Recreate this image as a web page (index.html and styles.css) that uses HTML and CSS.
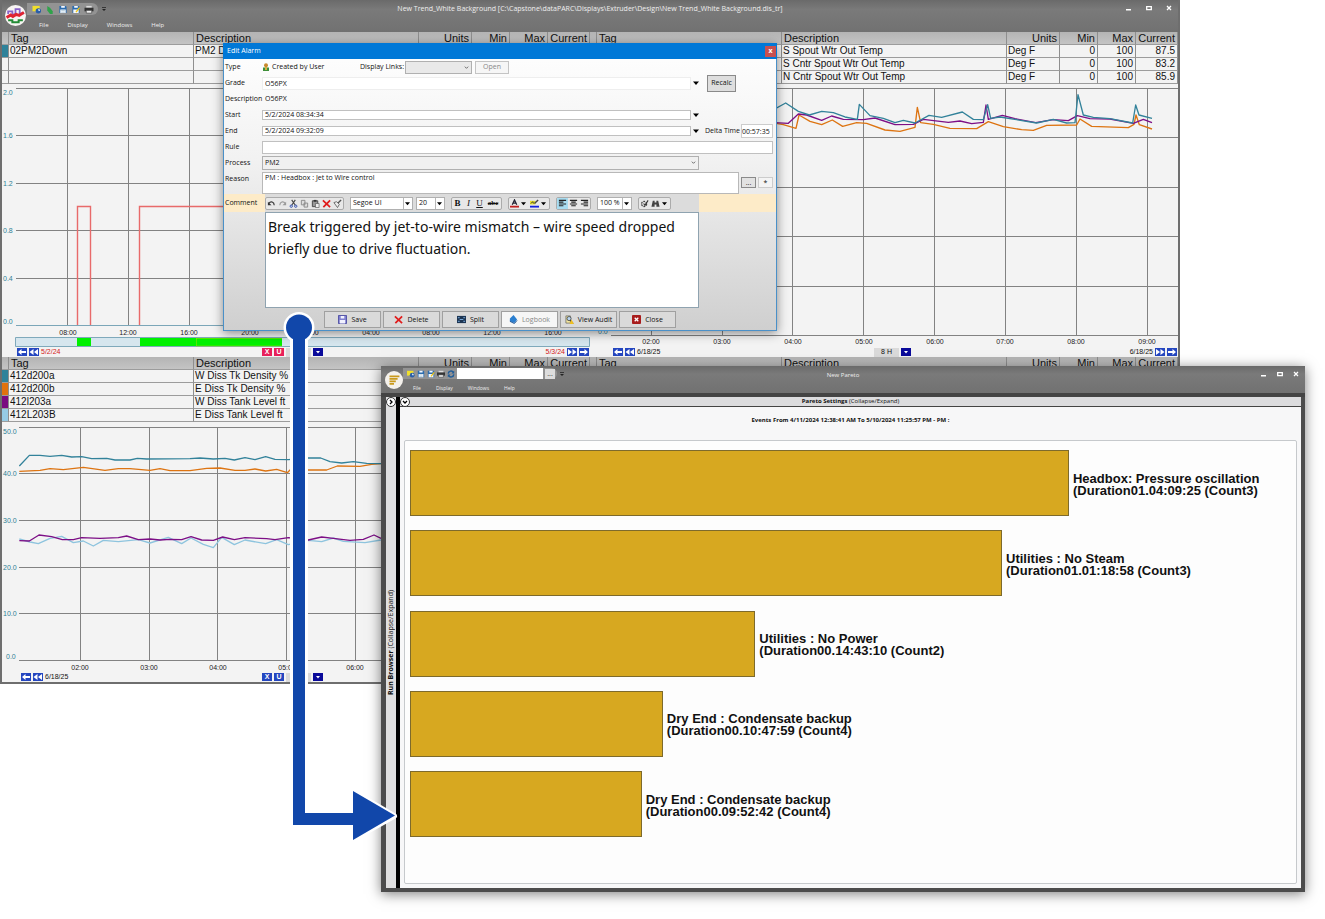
FILE: index.html
```html
<!DOCTYPE html>
<html lang="en">
<head>
<meta charset="utf-8">
<title>New Trend and Pareto</title>
<link rel="stylesheet" href="styles.css">
</head>
<body>
<svg class="sprite" aria-hidden="true">
  <symbol id="i-find" viewBox="0 0 10 10"><rect x="0" y="1" width="8" height="6" fill="#f0df2c"/><circle cx="6.5" cy="6.5" r="3" fill="#2a5fa8"/><path d="M6.500 4.500a2 2 0 0 1 2 2h-2z" fill="#fff"/></symbol>
  <symbol id="i-tag" viewBox="0 0 10 10"><path d="M2 1l3 2 3 4v3H5L2 6z" fill="#2fa34a"/></symbol>
  <symbol id="i-disk" viewBox="0 0 10 10"><path d="M1 1h7l1 1v7H1z" fill="#2c6cae"/><path d="M3 1h4v2H3zM2 5h6v4H2z" fill="#f2f8ff"/><path d="M3 6h4M3 8h4" stroke="#8ab" stroke-width=".6"/></symbol>
  <symbol id="i-diskas" viewBox="0 0 10 10"><path d="M1 1h7l1 1v7H1z" fill="#2c6cae"/><path d="M3 1h4v2H3zM2 5h6v4H2z" fill="#f2f8ff"/><path d="M9 3L5 8" stroke="#f1c40f" stroke-width="1.500"/></symbol>
  <symbol id="i-print" viewBox="0 0 10 10"><path d="M2 1h6v3H2z" fill="#ddd"/><path d="M0 3h10v4H0z" fill="#333"/><path d="M2 6h6v3H2z" fill="#eee" stroke="#333" stroke-width=".6"/></symbol>
  <symbol id="i-refresh" viewBox="0 0 10 10"><path d="M1.500 4.500A3.500 3.500 0 0 1 8 3M8.500 5.500A3.500 3.500 0 0 1 2 7" fill="none" stroke="#1f5c99" stroke-width="1.800"/><path d="M9 1v3.500H5.500zM1 9V5.500h3.500z" fill="#1f5c99"/></symbol>
  <symbol id="i-more" viewBox="0 0 6 6"><path d="M1 1h4v.8H1zM1 3h4L3 5z" fill="#222"/></symbol>
  <symbol id="i-down" viewBox="0 0 6 6"><path d="M0 1.500h6L3 5z" fill="#000"/></symbol>
  <symbol id="i-chev" viewBox="0 0 6 6"><path d="M1 2l2 2 2-2" fill="none" stroke="#555"/></symbol>
  <symbol id="i-min" viewBox="0 0 8 8"><path d="M1 5h5v1.500H1z" fill="#fff"/></symbol>
  <symbol id="i-max" viewBox="0 0 8 8"><path d="M1.700 2.700h4.600v3H1.700z" fill="none" stroke="#fff" stroke-width="1.300"/></symbol>
  <symbol id="i-x" viewBox="0 0 8 8"><path d="M2 2l4 4M6 2L2 6" stroke="#fff" stroke-width="1.300"/></symbol>
  <symbol id="n-back" viewBox="0 0 10 8"><path d="M1 4l3.500-3v2H9v2H4.500v2z" fill="#fff"/></symbol>
  <symbol id="n-rew" viewBox="0 0 10 8"><path d="M.5 4l4-3v6zM5 4l4-3v6z" fill="#fff"/></symbol>
  <symbol id="n-ff" viewBox="0 0 10 8"><path d="M9.500 4l-4-3v6zM5 4L1 1v6z" fill="#fff"/></symbol>
  <symbol id="n-fwd" viewBox="0 0 10 8"><path d="M9 4L5.500 1v2H1v2h4.500v2z" fill="#fff"/></symbol>
  <symbol id="n-drop" viewBox="0 0 10 8"><path d="M3 3h4L5 5.500z" fill="#fff"/></symbol>
  <symbol id="t-undo" viewBox="0 0 10 10"><path d="M2 5c2-3 6-2 6 2" fill="none" stroke="#333" stroke-width="1.300"/><path d="M1 3v4h4z" fill="#333"/></symbol>
  <symbol id="t-redo" viewBox="0 0 10 10"><path d="M8 5C6 2 2 3 2 7" fill="none" stroke="#999" stroke-width="1.200"/><path d="M9 3v4H5z" fill="#999"/></symbol>
  <symbol id="t-cut" viewBox="0 0 10 10"><path d="M3 1l4 6M7 1L3 7" stroke="#444" stroke-width="1.200"/><circle cx="2.500" cy="8" r="1.300" fill="none" stroke="#2a4bb0"/><circle cx="7.500" cy="8" r="1.300" fill="none" stroke="#2a4bb0"/></symbol>
  <symbol id="t-copy" viewBox="0 0 10 10"><path d="M1.500 1.500h4v5h-4zM4.500 4.500h4v4.500h-4z" fill="#ddd" stroke="#888"/></symbol>
  <symbol id="t-paste" viewBox="0 0 10 10"><path d="M1.500 2h6v6.500h-6z" fill="#999" stroke="#444"/><path d="M3 1h3v2H3z" fill="#333"/><path d="M5 5h4v4.500H5z" fill="#eee" stroke="#555" stroke-width=".7"/></symbol>
  <symbol id="t-del" viewBox="0 0 10 10"><path d="M1 1.500l8 7.500M9 1.500L1.500 9" stroke="#e01b1b" stroke-width="1.900"/></symbol>
  <symbol id="t-brush" viewBox="0 0 10 10"><path d="M5 5l4-4" stroke="#555" stroke-width="1.500"/><path d="M1 4l3-1 3 3-2 3.500z" fill="#eee" stroke="#555" stroke-width=".9"/></symbol>
  <symbol id="t-color" viewBox="0 0 10 10"><path d="M2.500 6.500L5 1l2.500 5.500M3.500 4.500h3" fill="none" stroke="#223" stroke-width="1.400"/><path d="M0 7.500h10v2H0z" fill="#c22020"/></symbol>
  <symbol id="t-high" viewBox="0 0 10 10"><path d="M0 2h6v4H0z" fill="#e6df2a"/><path d="M5 5l4-4" stroke="#444" stroke-width="1.600"/><path d="M1 5l2-2 1 2" fill="none" stroke="#333"/><path d="M0 7.500h10v2H0z" fill="#1220e0"/></symbol>
  <symbol id="t-left" viewBox="0 0 10 10"><path d="M1 1.500h8M1 3.500h5M1 5.500h8M1 7.500h5" stroke="#222" stroke-width="1.200"/></symbol>
  <symbol id="t-center" viewBox="0 0 10 10"><path d="M1 1.500h8M2.500 3.500h5M1 5.500h8M2.500 7.500h5" stroke="#222" stroke-width="1.200"/></symbol>
  <symbol id="t-right" viewBox="0 0 10 10"><path d="M1 1.500h8M4 3.500h5M1 5.500h8M4 7.500h5" stroke="#222" stroke-width="1.200"/></symbol>
  <symbol id="t-spell" viewBox="0 0 10 10"><circle cx="4.500" cy="5.500" r="2.800" fill="none" stroke="#444" stroke-width="1.500" stroke-dasharray="2 1"/><path d="M4 5l1.500 2L9 1.500" fill="none" stroke="#333" stroke-width="1.200"/></symbol>
  <symbol id="t-bino" viewBox="0 0 10 10"><path d="M2 2h2v2h2V2h2l1.500 6.500H6V6H4v2.500H.5z" fill="#444"/></symbol>
  <symbol id="b-save" viewBox="0 0 10 10"><path d="M.5.5h9v9h-9z" fill="#8080d0" stroke="#4a4aa0"/><path d="M3 1h4v3H3zM2 5.500h6v4H2z" fill="#f2f2ff"/></symbol>
  <symbol id="b-split" viewBox="0 0 10 10"><path d="M0 1h10v8H0z" fill="#1d3553"/><path d="M3 5h4M1 3h2M7 3h2M1 7h2M7 7h2" stroke="#7fb4e8"/></symbol>
  <symbol id="b-book" viewBox="0 0 10 10"><path d="M1 4l4-4 4 5-3 4-5-2z" fill="#2b7fd0"/><path d="M1 7l5 2.500L9 6" fill="none" stroke="#1a4f90"/></symbol>
  <symbol id="b-audit" viewBox="0 0 10 10"><path d="M1 1h5v8H1z" fill="#f4e6a0" stroke="#555" stroke-width=".7"/><circle cx="4.500" cy="4" r="2.300" fill="#b7d4ef" stroke="#333" stroke-width=".8"/><path d="M6 6l3 3.500" stroke="#222" stroke-width="1.200"/><path d="M7 5l3 5H5z" fill="#f0c020"/></symbol>
  <symbol id="b-close" viewBox="0 0 10 10"><rect width="10" height="10" rx="1" fill="#a81c1c"/><path d="M3 3l4 4M7 3L3 7" stroke="#fff" stroke-width="1.400"/></symbol>
</svg>

<main class="desktop">
  <section class="window trend" aria-label="New Trend">
    <header class="titlebar">
      <svg class="logo" viewBox="0 0 20 20" aria-hidden="true"><circle cx="10" cy="10" r="10" fill="#f7f4f2"/><path d="M3 8.500V6h4v3h3V4h4v4h4" fill="none" stroke="#8a63c9" stroke-width="1.700"/><path d="M1.500 12l4-2.500 2 1.500 3-2 3 1 4.500-3" fill="none" stroke="#e02431" stroke-width="2.800"/><path d="M3 14.500h4v2h6v-2h4" fill="none" stroke="#238a35" stroke-width="1.900"/></svg>
      <div class="bar-main">
        <div class="quick">
          <svg><use href="#i-find"/></svg><svg><use href="#i-tag"/></svg><svg><use href="#i-disk"/></svg><svg><use href="#i-diskas"/></svg><svg><use href="#i-print"/></svg>
        </div>
        <svg class="more"><use href="#i-more"/></svg>
        <nav class="menu"><button>File</button><button>Display</button><button>Windows</button><button>Help</button></nav>
      </div>
      <h1 class="caption">New Trend_White Background [C:\Capstone\dataPARC\Displays\Extruder\Design\New Trend_White Background.dis_tr]</h1>
      <div class="controls">
        <button aria-label="Minimize"><svg><use href="#i-min"/></svg></button><button aria-label="Maximize"><svg><use href="#i-max"/></svg></button><button aria-label="Close"><svg><use href="#i-x"/></svg></button>
      </div>
    </header>

    <div class="panels">
      <section class="panel">
        <table class="tags">
          <thead><tr><th class="sw"></th><th class="tag">Tag</th><th class="desc">Description</th><th class="units">Units</th><th class="num">Min</th><th class="num">Max</th><th class="cur">Current</th></tr></thead>
          <tbody>
            <tr><td class="teal"></td><td>02PM2Down</td><td>PM2 Down</td><td></td><td></td><td></td><td></td></tr>
            <tr><td></td><td></td><td></td><td></td><td></td><td></td><td></td></tr>
            <tr><td></td><td></td><td></td><td></td><td></td><td></td><td></td></tr>
          </tbody>
        </table>
        <svg class="chart" viewBox="2 84 588 264" role="img" aria-label="02PM2Down trend">
          <path class="grid" d="M16 88.500H590M16 135.500H590M16 183.500H590M16 230.500H590M16 278.500H590M67.500 88V326M128.500 88V326M189.500 88V326M249.500 88V326M310.500 88V326M371.500 88V326M431.500 88V326M492.500 88V326M553.500 88V326"/>
          <path d="M16 325.500H590" stroke="#7ba6b8"/>
          <path d="M77.500 325V206.500H90.500V325M139.500 325V206.500H300" fill="none" stroke="#e86a6a" stroke-width="1.400"/>
          <g class="yaxis"><text x="3" y="95">2.0</text><text x="3" y="138">1.6</text><text x="3" y="186">1.2</text><text x="3" y="233">0.8</text><text x="3" y="281">0.4</text><text x="3" y="324">0.0</text></g>
          <g class="xaxis"><text x="68" y="335">08:00</text><text x="128" y="335">12:00</text><text x="189" y="335">16:00</text><text x="250" y="335">20:00</text><text x="310" y="335">00:00</text><text x="371" y="335">04:00</text><text x="431" y="335">08:00</text><text x="492" y="335">12:00</text><text x="553" y="335">16:00</text></g>
          <path d="M15.500 337.500h574v9h-574z" fill="#d6e6ee" stroke="#7fa9bb"/>
          <path d="M77 338h14v8H77zM140 338h142v8H140z" fill="#00f000"/><path d="M196.500 338v8M196 338.500h86M196 346h86" stroke="#8fe000" stroke-width=".6"/>
        </svg>
        <div class="navrow">
          <div class="navend"><button class="nav" aria-label="Back"><svg><use href="#n-back"/></svg></button><button class="nav" aria-label="Rewind"><svg><use href="#n-rew"/></svg></button><span class="red">5/2/24</span></div>
          <div class="navmid"><button class="nav pink">X</button><button class="nav pink">U</button><span class="span"></span><button class="nav dark" aria-label="Range"><svg><use href="#n-drop"/></svg></button></div>
          <div class="navend last"><span class="red">5/3/24</span><button class="nav" aria-label="Fast forward"><svg><use href="#n-ff"/></svg></button><button class="nav" aria-label="Forward"><svg><use href="#n-fwd"/></svg></button></div>
        </div>
      </section>

      <section class="panel">
        <table class="tags">
          <thead><tr><th class="sw"></th><th class="tag">Tag</th><th class="desc">Description</th><th class="units">Units</th><th class="num">Min</th><th class="num">Max</th><th class="cur">Current</th></tr></thead>
          <tbody>
            <tr><td></td><td></td><td>S Spout Wtr Out Temp</td><td>Deg F</td><td class="r">0</td><td class="r">100</td><td class="r">87.5</td></tr>
            <tr><td></td><td></td><td>S Cntr Spout Wtr Out Temp</td><td>Deg F</td><td class="r">0</td><td class="r">100</td><td class="r">83.2</td></tr>
            <tr><td></td><td></td><td>N Cntr Spout Wtr Out Temp</td><td>Deg F</td><td class="r">0</td><td class="r">100</td><td class="r">85.9</td></tr>
          </tbody>
        </table>
        <svg class="chart" viewBox="590 84 588 264" role="img" aria-label="Spout water temperature trend">
          <path class="grid" d="M611 88.500H1178M611 137.500H1178M611 187.500H1178M611 236.500H1178M611 286.500H1178M611 335.500H1178M651.500 88V335M722.500 88V335M792.500 88V335M863.500 88V335M934.500 88V335M1005.500 88V335M1076.500 88V335M1147.500 88V335"/>
          <g class="yaxis"><text x="598" y="334">0.0</text></g>
          <g class="traces" transform="translate(770 0) scale(.33333)">
            <polyline stroke="#dd7412" points="0,367 40,374 78,385 87,345 120,364 155,374 187,360 218,379 260,368 290,370 345,390 390,394 435,382 442,322 452,368 490,373 540,385 620,386 655,365 700,380 755,389 790,391 830,376 920,375 930,357 965,379 1075,383 1092,373 1098,345 1108,374 1146,387"/>
            <polyline stroke="#7d0f86" points="0,367 55,370 85,342 110,345 155,361 185,348 220,358 280,359 315,354 375,374 430,373 460,358 535,367 570,363 605,371 640,367 648,315 655,358 697,346 735,356 797,368 850,359 895,362 922,347 960,356 1020,357 1090,370 1120,358 1146,368"/>
            <polyline stroke="#32829a" points="0,335 47,309 85,334 118,345 155,334 190,338 225,351 262,358 268,313 300,347 340,355 375,368 400,361 435,369 477,346 515,352 577,336 610,358 640,359 653,314 662,355 690,351 800,369 850,358 890,369 915,368 924,284 940,345 970,352 1020,356 1088,369 1097,315 1107,345 1146,355"/>
          </g>
          <g class="xaxis"><text x="651" y="344">02:00</text><text x="722" y="344">03:00</text><text x="793" y="344">04:00</text><text x="864" y="344">05:00</text><text x="935" y="344">06:00</text><text x="1005" y="344">07:00</text><text x="1076" y="344">08:00</text><text x="1147" y="344">09:00</text></g>
        </svg>
        <div class="navrow deep">
          <div class="navend"><button class="nav" aria-label="Back"><svg><use href="#n-back"/></svg></button><button class="nav" aria-label="Rewind"><svg><use href="#n-rew"/></svg></button><span>6/18/25</span></div>
          <div class="navmid"><span class="span">8 H</span><button class="nav dark" aria-label="Range"><svg><use href="#n-drop"/></svg></button></div>
          <div class="navend last"><span>6/18/25</span><button class="nav" aria-label="Fast forward"><svg><use href="#n-ff"/></svg></button><button class="nav" aria-label="Forward"><svg><use href="#n-fwd"/></svg></button></div>
        </div>
      </section>

      <section class="panel">
        <table class="tags">
          <thead><tr><th class="sw"></th><th class="tag">Tag</th><th class="desc">Description</th><th class="units">Units</th><th class="num">Min</th><th class="num">Max</th><th class="cur">Current</th></tr></thead>
          <tbody>
            <tr><td class="teal"></td><td>412d200a</td><td>W Diss Tk Density %</td><td></td><td></td><td></td><td></td></tr>
            <tr><td class="orange"></td><td>412d200b</td><td>E Diss Tk Density %</td><td></td><td></td><td></td><td></td></tr>
            <tr><td class="purple"></td><td>412l203a</td><td>W Diss Tank Level ft</td><td></td><td></td><td></td><td></td></tr>
            <tr><td class="sky"></td><td>412L203B</td><td>E Diss Tank Level ft</td><td></td><td></td><td></td><td></td></tr>
          </tbody>
        </table>
        <svg class="chart" viewBox="2 422 588 251" role="img" aria-label="Density and level trend">
          <path class="grid" d="M19 427.500H590M19 473.500H590M19 520.500H590M19 567.500H590M19 613.500H590M19 660.500H590M80.500 427V660M149.500 427V660M217.500 427V660M286.500 427V660M355.500 427V660"/>
          <g class="yaxis"><text x="3" y="434">50.0</text><text x="3" y="476">40.0</text><text x="3" y="523">30.0</text><text x="3" y="570">20.0</text><text x="3" y="616">10.0</text><text x="6" y="659">0.0</text></g>
          <g class="traces" transform="translate(0 420) scale(.33333)">
            <polyline stroke="#8ec4de" points="58,357 90,366 115,371 150,355 185,349 220,368 250,363 280,378 310,361 355,365 415,359 450,369 505,352 545,371 573,354 610,373 640,383 665,352 703,374 735,360 797,371 830,359 865,374 925,361 965,365 1000,354 1030,364 1095,368 1143,360"/>
            <polyline stroke="#7d0f86" points="58,362 88,363 117,345 155,350 187,359 220,359 245,353 300,355 355,353 380,348 415,359 450,357 480,360 510,358 545,359 573,350 605,360 640,361 668,351 703,359 735,353 800,356 825,359 865,353 925,360 965,351 1000,355 1050,361 1090,358 1122,345 1143,355"/>
            <polyline stroke="#dd7412" points="58,154 120,151 150,146 190,149 250,142 315,151 355,146 390,146 450,151 480,146 510,152 570,152 620,145 660,144 705,151 735,151 765,147 797,153 830,148 862,158 870,150 925,150 980,150 1012,138 1080,139 1115,133 1143,131"/>
            <polyline stroke="#32829a" points="58,138 88,106 120,106 150,109 185,106 215,111 245,110 275,116 320,115 345,120 390,120 412,115 440,117 570,116 600,114 640,117 675,115 703,120 735,113 765,119 797,110 825,118 865,119 925,114 962,114 990,125 1025,129 1060,125 1100,130 1143,131"/>
          </g>
          <g class="xaxis"><text x="80" y="670">02:00</text><text x="149" y="670">03:00</text><text x="218" y="670">04:00</text><text x="287" y="670">05:00</text><text x="355" y="670">06:00</text></g>
        </svg>
        <div class="navrow inset">
          <div class="navend"><button class="nav" aria-label="Back"><svg><use href="#n-back"/></svg></button><button class="nav" aria-label="Rewind"><svg><use href="#n-rew"/></svg></button><span>6/18/25</span></div>
          <div class="navmid"><button class="nav">X</button><button class="nav">U</button><span class="span"></span><button class="nav dark" aria-label="Range"><svg><use href="#n-drop"/></svg></button></div>
          <div class="navend last"></div>
        </div>
      </section>

      <section class="panel">
        <table class="tags">
          <thead><tr><th class="sw"></th><th class="tag">Tag</th><th class="desc">Description</th><th class="units">Units</th><th class="num">Min</th><th class="num">Max</th><th class="cur">Current</th></tr></thead>
        </table>
      </section>
    </div>
  </section>

  <form class="dialog" aria-label="Edit Alarm" onsubmit="return false">
    <header class="dlg-title"><span>Edit Alarm</span><button type="button" class="dlg-x" aria-label="Close dialog">x</button></header>
    <div class="row"><span class="lbl">Type</span>
      <div class="field type"><svg class="person" viewBox="0 0 8 8" aria-hidden="true"><circle cx="4" cy="2.300" r="2" fill="#c98a2c"/><path d="M1 4.500h6V8H1z" fill="#3f8f3a"/><path d="M3 4h2v3H3z" fill="#d8b040"/></svg><span class="created">Created by User</span><label for="links">Display Links:</label><span class="pick links"><select id="links"></select><svg><use href="#i-chev"/></svg></span><button type="button" class="open" disabled>Open</button></div></div>
    <div class="row"><label class="lbl" for="grade">Grade</label><div class="field"><input id="grade" class="tall" value="O56PX"><button type="button" class="arrow" aria-label="Choose grade"><svg><use href="#i-down"/></svg></button></div><div class="side"><button type="button" class="recalc">Recalc</button></div></div>
    <div class="row"><span class="lbl">Description</span><div class="field"><span class="plain">O56PX</span></div></div>
    <div class="row"><label class="lbl" for="start">Start</label><div class="field"><input id="start" value="5/2/2024 08:34:34"><button type="button" class="arrow" aria-label="Choose start"><svg><use href="#i-down"/></svg></button></div><div class="side"></div></div>
    <div class="row"><label class="lbl" for="end">End</label><div class="field"><input id="end" value="5/2/2024 09:32:09"><button type="button" class="arrow" aria-label="Choose end"><svg><use href="#i-down"/></svg></button></div><div class="side"><label for="delta">Delta Time</label><input id="delta" class="delta" value="00:57:35"></div></div>
    <div class="row"><label class="lbl" for="rule">Rule</label><div class="field wide"><input id="rule" class="tall boxed"></div></div>
    <div class="row"><label class="lbl" for="process">Process</label><div class="field"><span class="pick process"><select id="process"><option>PM2</option></select><svg><use href="#i-chev"/></svg></span></div><div class="side"></div></div>
    <div class="row reason"><label class="lbl" for="reason">Reason</label><div class="field wide"><textarea id="reason">PM : Headbox : Jet to Wire control</textarea><button type="button" class="mini">...</button><button type="button" class="mini faint">*</button></div></div>
    <div class="row comment"><label class="lbl" for="comment">Comment</label>
      <div class="tools">
        <div class="group"><button type="button" aria-label="Undo"><svg><use href="#t-undo"/></svg></button><button type="button" aria-label="Redo"><svg><use href="#t-redo"/></svg></button><button type="button" aria-label="Cut"><svg><use href="#t-cut"/></svg></button><button type="button" aria-label="Copy"><svg><use href="#t-copy"/></svg></button><button type="button" aria-label="Paste"><svg><use href="#t-paste"/></svg></button><button type="button" aria-label="Clear"><svg><use href="#t-del"/></svg></button><button type="button" aria-label="Format"><svg><use href="#t-brush"/></svg></button></div>
        <div class="pair"><span class="pick split font"><select aria-label="Font"><option>Segoe UI</option></select><svg><use href="#i-down"/></svg></span><span class="pick split size"><select aria-label="Font size"><option>20</option></select><svg><use href="#i-down"/></svg></span></div>
        <div class="group letters"><button type="button"><b>B</b></button><button type="button"><i>I</i></button><button type="button"><u>U</u></button><button type="button" class="abc"><s>abc</s></button></div>
        <div class="group"><button type="button" aria-label="Text colour"><svg><use href="#t-color"/></svg></button><svg class="caret"><use href="#i-down"/></svg><button type="button" aria-label="Highlight"><svg><use href="#t-high"/></svg></button><svg class="caret"><use href="#i-down"/></svg></div>
        <div class="group"><button type="button" class="on" aria-label="Align left"><svg><use href="#t-left"/></svg></button><button type="button" aria-label="Align center"><svg><use href="#t-center"/></svg></button><button type="button" aria-label="Align right"><svg><use href="#t-right"/></svg></button></div>
        <span class="pick split zoom"><select aria-label="Zoom"><option>100 %</option></select><svg><use href="#i-down"/></svg></span>
        <div class="group"><button type="button" aria-label="Spelling"><svg><use href="#t-spell"/></svg></button><button type="button" aria-label="Find"><svg><use href="#t-bino"/></svg></button><svg class="caret"><use href="#i-down"/></svg></div>
      </div>
      <div class="side cream"></div></div>
    <div class="editor"><textarea id="comment">Break triggered by jet-to-wire mismatch – wire speed dropped briefly due to drive fluctuation.</textarea></div>
    <div class="actions">
      <button type="button"><svg><use href="#b-save"/></svg>Save</button><button type="button"><svg><use href="#t-del"/></svg>Delete</button><button type="button"><svg><use href="#b-split"/></svg>Split</button><button type="button" class="off" disabled><svg><use href="#b-book"/></svg>Logbook</button><button type="button"><svg><use href="#b-audit"/></svg>View Audit</button><button type="button"><svg><use href="#b-close"/></svg>Close</button>
    </div>
  </form>

  <section class="window pareto" aria-label="New Pareto">
    <header class="titlebar small">
      <svg class="logo" viewBox="0 0 20 20" aria-hidden="true"><circle cx="10" cy="10" r="10" fill="#f4f1ec"/><path d="M5 6h11M5 8.800h9M5 11.600h7M5 14.400h5" stroke="#c99a1c" stroke-width="1.900"/></svg>
      <div class="bar-main">
        <div class="quick">
          <svg><use href="#i-find"/></svg><svg><use href="#i-disk"/></svg><svg><use href="#i-diskas"/></svg><svg><use href="#i-print"/></svg><svg><use href="#i-refresh"/></svg><input aria-label="Search"><button>...</button>
        </div>
        <svg class="more"><use href="#i-more"/></svg>
        <nav class="menu"><button>File</button><button>Display</button><button>Windows</button><button>Help</button></nav>
      </div>
      <h2 class="caption">New Pareto</h2>
      <div class="controls">
        <button aria-label="Minimize"><svg><use href="#i-min"/></svg></button><button aria-label="Maximize"><svg><use href="#i-max"/></svg></button><button aria-label="Close"><svg><use href="#i-x"/></svg></button>
      </div>
    </header>
    <div class="pareto-body">
      <aside class="strip"><button class="round" aria-label="Expand run browser"><svg viewBox="0 0 8 8"><path d="M3 2l2 2-2 2" fill="none" stroke="#000" stroke-width="1.300"/></svg></button><p class="vert"><b>Run Browser</b> (Collapse/Expand)</p></aside>
      <div class="content">
        <div class="settings"><button class="round" aria-label="Expand settings"><svg viewBox="0 0 8 8"><path d="M2 3l2 2 2-2" fill="none" stroke="#000" stroke-width="1.300"/></svg></button><p><b>Pareto Settings</b> (Collapse/Expand)</p></div>
        <p class="events">Events From 4/11/2024 12:38:41 AM To 5/10/2024 11:25:57 PM - PM :</p>
        <div class="plot">
          <div class="item"><div class="bar" style="width:74.8%"></div><p>Headbox: Pressure oscillation<br>(Duration01.04:09:25 (Count3)</p></div>
          <div class="item"><div class="bar" style="width:67.2%"></div><p>Utilities : No Steam<br>(Duration01.01:18:58 (Count3)</p></div>
          <div class="item"><div class="bar" style="width:39.2%"></div><p>Utilities : No Power<br>(Duration00.14:43:10 (Count2)</p></div>
          <div class="item"><div class="bar" style="width:28.7%"></div><p>Dry End : Condensate backup<br>(Duration00.10:47:59 (Count4)</p></div>
          <div class="item"><div class="bar" style="width:26.3%"></div><p>Dry End : Condensate backup<br>(Duration00.09:52:42 (Count4)</p></div>
        </div>
      </div>
    </div>
  </section>

  <svg class="connector" viewBox="280 310 122 535" aria-hidden="true">
    <g fill="#fff" stroke="#fff" stroke-width="6" stroke-linejoin="round"><circle cx="299" cy="327.500" r="12.500"/><path d="M293 328v497h60v14l41-23-41-24v21h-48V328z"/></g>
    <g fill="#1147aa"><circle cx="299" cy="327.500" r="13"/><path d="M293 328v497h60v15l42-24.500L353 791v22h-48V328z"/></g>
  </svg>
</main>
</body>
</html>
```
FILE: styles.css
```css
* { box-sizing: border-box; }
body { margin: 0; background: #fff; color: #111; font-family: "Open Sans", "Noto Sans", sans-serif; font-size: 7px; line-height: 10px; }
h1, h2, p { margin: 0; font-weight: normal; }
button, input, select, textarea { font: inherit; color: inherit; margin: 0; padding: 0; border: 0; border-radius: 0; background: none; }
button { display: inline-flex; align-items: center; justify-content: center; }
select { appearance: none; width: 100%; height: 100%; }
textarea { resize: none; overflow: hidden; }
svg { display: block; flex: none; }
.sprite { position: absolute; width: 0; height: 0; }
.desktop { position: relative; min-height: 919px; overflow: hidden; }

/* Window chrome */
.trend { width: calc(100% - 145px); background: #f3f3f3; border: solid #6e6e6e; border-width: 0 2px 2px; }
.titlebar { display: grid; grid-template-columns: 1fr auto 1fr; height: 32px; background: linear-gradient(#6a6a6a, #7a7a7a 30%, #717171); color: #eee; position: relative; }
.logo { position: absolute; left: 3px; top: 5px; width: 21px; height: 21px; }
.bar-main { display: grid; grid-template-columns: auto 1fr; align-content: start; gap: 0 3px; padding: 3px 0 0 25px; }
.quick { display: flex; align-items: center; gap: 3px; height: 12px; padding: 0 4px 0 5px; background: #939393; border-radius: 0 6px 6px 0; }
.quick svg { width: 10px; height: 9px; }
.more { width: 6px; height: 6px; align-self: center; }
.menu { grid-column: 1 / -1; display: flex; gap: 19px; padding: 5px 0 0 12px; font-size: 6px; }
.menu button { line-height: 10px; }
.caption { font-size: 7px; line-height: 10px; padding-top: 4px; white-space: nowrap; }
.controls { display: flex; justify-content: flex-end; align-items: flex-start; gap: 12px; padding: 4px 5px 0 0; }
.controls svg { width: 8px; height: 8px; }

/* Trend panels */
.panels { display: grid; grid-template-columns: 1fr 1fr; }
.panel { min-width: 0; }
.tags { width: 100%; table-layout: fixed; border-collapse: separate; border-spacing: 0; font-family: "Liberation Sans", Arial, sans-serif; font-size: 10px; line-height: 12px; }
.tags th, .tags td { height: 13px; padding: 0 2px 0 1px; overflow: hidden; white-space: nowrap; border-right: 1px solid #8e8e8e; border-bottom: 1px solid #9c9c9c; }
.tags th { font-size: 11px; font-weight: normal; text-align: left; padding: 0 2px; background: linear-gradient(#b4b4b4, #c4c4c4); }
.tags .sw { width: 7px; }
.tags .desc { width: 225px; }
.tags .units { width: 53px; }
.tags .num { width: 38px; }
.tags .cur { width: 42px; }
.tags .units, .tags .num, .tags .cur, .tags .r { text-align: right; }
.teal { background: #2f829a; }
.orange { background: #e0720e; }
.purple { background: #7a0a80; }
.sky { background: #96cbe4; }
.chart { width: 100%; height: auto; font-family: "Liberation Sans", Arial, sans-serif; font-size: 7px; }
.grid { stroke: #828282; fill: none; }
.yaxis { fill: #2f8093; }
.xaxis { fill: #222; text-anchor: middle; }
.traces { fill: none; stroke-width: 4px; stroke-linejoin: round; }
.navrow { display: grid; grid-template-columns: 1fr auto 1fr; height: 9px; font-family: "Liberation Sans", Arial, sans-serif; line-height: 8px; }
.navend { padding: 0 1px 0 15px; }
.inset .navend { padding-left: 19px; }
.deep .navend { padding-left: 23px; }
.navend, .navmid { display: flex; gap: 2px; }
.last, .navmid { justify-content: flex-end; }
.navmid { width: 54px; }
.nav { flex: none; width: 10px; height: 8px; background: #2446c0; color: #fff; font-weight: bold; }
.nav svg { width: 10px; height: 8px; }
.pink { background: #e8205a; }
.dark { background: #0a0a9a; }
.span { flex: none; width: 25px; background: #dadada; text-align: center; }
.red { color: #d42020; }

/* Edit Alarm dialog */
.dialog { position: absolute; left: 223px; top: 43px; width: 554px; background: linear-gradient(#fff, #f2f2f2 40%, #cfcfcf); border: solid #4a90c8; border-width: 0 1px 1px; box-shadow: 0 2px 10px rgba(0, 0, 0, .45); }
.dlg-title { display: flex; justify-content: space-between; align-items: center; height: 16px; margin: 0 -1px; padding-left: 4px; background: #0078d7; color: #fff; }
.dlg-x { width: 11px; height: 11px; margin-right: 1px; background: #c75050; font-weight: bold; }
.row { display: flex; align-items: center; height: 16px; }
.lbl { flex: none; width: 38px; padding-left: 1px; white-space: nowrap; }
.field { flex: 1; display: flex; align-items: center; min-width: 0; }
.side { flex: none; width: 77px; display: flex; align-items: center; justify-content: space-between; padding: 0 3px 0 6px; white-space: nowrap; }
.field input { flex: 1; min-width: 0; height: 10px; padding: 0 2px; background: #fff; border: 1px solid #c0c0c0; }
.field input.tall { height: 13px; border-color: #eee; }
.field input.boxed { border-color: #c0c0c0; }
.wide { padding-right: 3px; }
.arrow { width: 8px; height: 10px; justify-content: flex-end; }
.arrow svg { width: 6px; height: 6px; }
.plain { padding-left: 3px; }
.person { width: 8px; height: 8px; }
.created { width: 88px; margin-left: 2px; }
.pick { position: relative; height: 13px; border: 1px solid #b0b0b0; background: #fff; }
.pick select { display: block; padding-left: 2px; }
.pick svg { position: absolute; right: 2px; top: 3px; width: 5px; height: 5px; pointer-events: none; }
.split select { background: linear-gradient(#b8b8b8, #b8b8b8) right 8px top / 1px 100% no-repeat; }
.links { width: 67px; margin-left: 1px; background: #e9e9e9; }
.open { width: 34px; height: 13px; margin-left: 3px; border: 1px solid #c4c4c4; background: #f6f6f6; color: #888; }
.recalc { width: 29px; height: 17px; margin-left: 2px; border: 1px solid #8a8a8a; background: #dedede; }
.delta { flex: none; width: 32px; height: 14px; background: #fff; border: 1px solid #ccc; }
.process { flex: 1; height: 14px; background: #f0f0f0; }
.reason { height: 23px; align-items: stretch; line-height: 15px; }
.reason .field { gap: 2px; }
.reason textarea { flex: 1; height: 22px; padding: 0 2px; background: #fff; border: 1px solid #b8b8b8; line-height: 10px; }
.mini { width: 15px; height: 11px; border: 1px solid #8a8a8a; background: #e2e2e2; line-height: 6px; }
.mini.faint { border-color: #ccc; background: #f4f4f4; }
.comment { height: 18px; align-items: stretch; }
.comment .lbl { width: 41px; background: #fdebc8; line-height: 17px; }
.cream { background: #fdebc8; }
.tools { flex: 1; display: flex; align-items: center; gap: 6px; background: #dcdcdc; }
.group { display: flex; align-items: center; height: 13px; border: 1px solid #ababab; border-radius: 2px; background: #e8e8e8; }
.group button { width: 11px; height: 11px; }
.group button svg { width: 9px; height: 9px; }
.group .caret { width: 5px; height: 5px; margin: 0 3px 0 1px; }
.group .on { background: #a8dcf0; }
.letters { font-family: "Liberation Serif", serif; font-size: 9px; }
.letters .abc { width: 16px; font-size: 7px; font-weight: bold; }
.pair { display: flex; gap: 3px; }
.font { width: 63px; }
.size { width: 29px; }
.zoom { width: 35px; }
.editor { padding: 0 77px 0 41px; }
.editor textarea { display: block; width: 100%; height: 96px; padding: 3px 2px; background: #fff; border: 1px solid #8fa3b0; font-family: "Noto Sans", sans-serif; font-size: 14px; line-height: 22px; }
.actions { display: flex; justify-content: center; gap: 2px; padding: 3px 0 2px; }
.actions button { width: 57px; height: 17px; gap: 4px; border: 1px solid #a0a0a0; background: #dadada; }
.actions svg { width: 9px; height: 9px; }
.actions .off { background: #f6f6f6; color: #888; }

/* Pareto window */
.pareto { position: absolute; left: 381px; right: 20px; top: 366px; border: solid #4c4c4c; border-width: 0 4px 4px 5px; background: #000; box-shadow: 0 2px 12px rgba(0, 0, 0, .5); }
.small { height: 31px; margin: 0 -4px 0 -5px; border-bottom: 4px solid #444; }
.small .logo { left: 4px; top: 5px; width: 18px; height: 18px; }
.small .bar-main { padding: 2px 0 0 22px; gap: 0 2px; }
.small .quick { height: 11px; padding: 0 2px 0 4px; gap: 2px; }
.small .quick svg { width: 8px; height: 8px; }
.small .caption { font-size: 6px; }
.quick input { width: 86px; height: 11px; background: #fff; }
.quick button { width: 10px; height: 10px; background: #ddd; color: #333; }
.small .menu { font-size: 5px; gap: 15px; padding: 4px 0 0 10px; }
.small .controls { gap: 8px; }
.pareto-body { display: grid; grid-template-columns: 10px 1fr; column-gap: 4px; }
.strip { display: flex; flex-direction: column; align-items: center; justify-content: center; position: relative; background: #dfdfe0; }
.round { position: absolute; left: 0; top: 0; width: 10px; height: 10px; border: 1px solid #333; border-radius: 50%; background: #fff; }
.round svg { width: 8px; height: 8px; }
.vert { writing-mode: vertical-rl; transform: rotate(180deg); white-space: nowrap; }
.content { background: #f7f7f8; padding-bottom: 4px; min-width: 0; }
.settings { position: relative; height: 10px; background: #dcdcde; border-bottom: 1px solid #444; font-size: 6px; text-align: center; line-height: 9px; }
.events { font-size: 6px; font-weight: bold; text-align: center; line-height: 26px; padding-bottom: 7px; }
.plot { display: flex; flex-direction: column; justify-content: space-between; height: 444px; margin: 0 4px; padding: 9px 5px 46px; background: #fdfdfd; border: 1px solid #c6c9cc; border-radius: 2px; }
.item { display: flex; align-items: center; gap: 4px; }
.bar { height: 66px; background: #d7a820; border: 1px solid #7d6a2c; }
.item p { padding-top: 3px; font: bold 13px/12px "Liberation Sans", Arial, sans-serif; white-space: nowrap; }

.connector { position: absolute; left: 280px; top: 310px; width: 122px; height: 535px; }
```
